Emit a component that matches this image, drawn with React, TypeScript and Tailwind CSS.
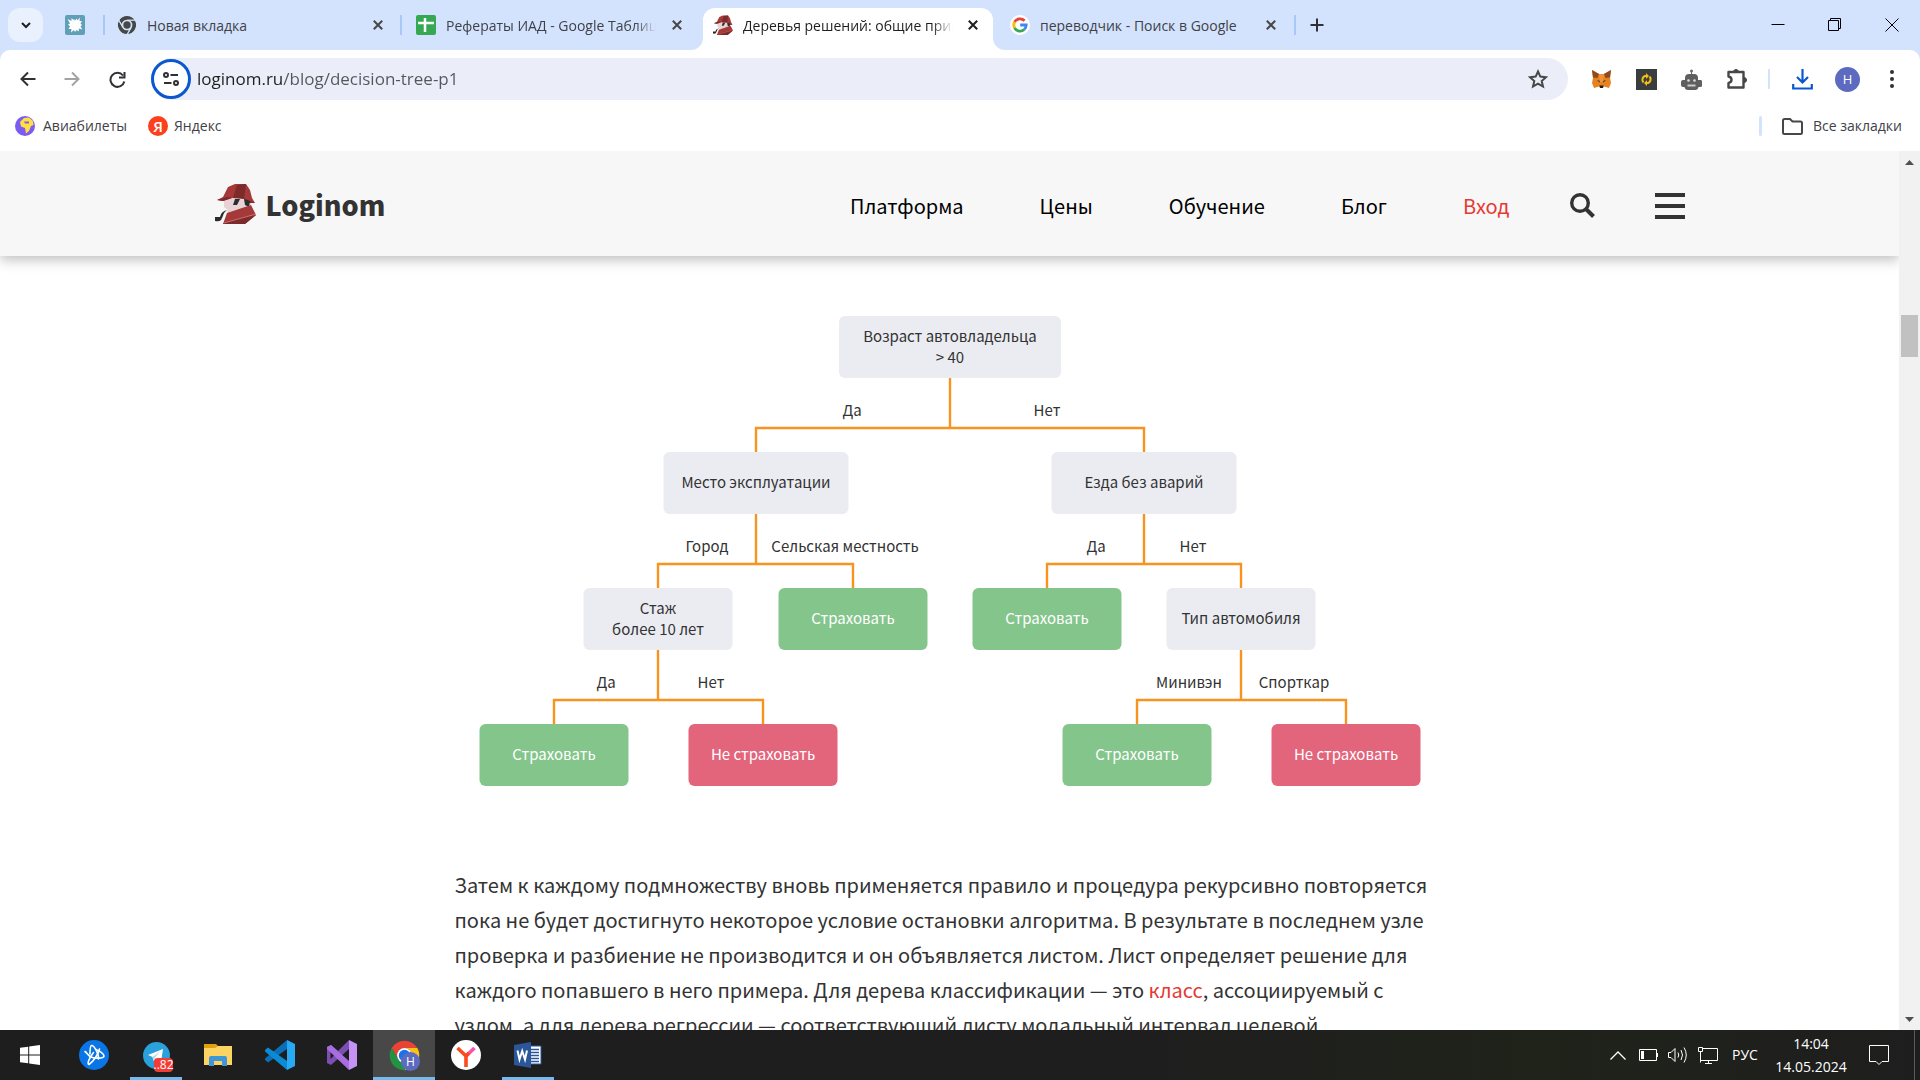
import React from "react";

const uiFont = "font-['Open_Sans','Noto_Sans',sans-serif]";
const siteFont = "font-['Noto_Sans_CJK_SC','Noto_Sans',sans-serif]";

/* ---------- icons ---------- */

function Detective({ className }: { className: string }) {
  return (
    <svg viewBox="0 0 41 41" className={className} aria-hidden="true">
      <path d="M9 16 24 14 37 17 35 25 12 31 13 27 9 24Z" fill="#e9d2d5" />
      <path d="M2 17 8 14 13 4 20 1 31 1 35 7 37 15 40 20 34 20 28 15 17 15 8 18Z" fill="#a53838" />
      <path d="M22 2 31 1 29 16 18 15Z" fill="#7d2a2a" />
      <path d="M2 17 12 14 17 15 8 18ZM28 15 40 20 34 20Z" fill="#7d2a2a" />
      <path d="M20 16 25 16 22 22 18 22ZM29 16 35 18 34 24 30 22Z" fill="#2c2c2c" />
      <path d="M12 30 36 22 41 32 30 41 8 41Z" fill="#a53838" />
      <path d="M9 40 41 32 30 41 8 41Z" fill="#7d2a2a" />
      <path d="M9 40 41 31" stroke="#e0a9a9" strokeWidth=".5" />
      <path d="M13 27 Q9 28 7.500 34 L6 37Q4 39 0 38L0 34 5 34Q6 28 13 27Z" fill="#2c2c2c" />
    </svg>
  );
}

function ChromeLogo({ className, mono = false }: { className: string; mono?: boolean }) {
  const gap = mono ? "#d3e3fd" : "none";
  return (
    <svg viewBox="1 1 46 46" className={className} aria-hidden="true">
      <g stroke={gap} strokeWidth="2.5">
        <path d="M4.95 13A22 22 0 0 1 43.05 13H24A11 11 0 0 0 14.47 29.5Z" fill={mono ? "#474747" : "#ea4335"} />
        <path d="M43.05 13A22 22 0 0 1 24 46L33.53 29.5A11 11 0 0 0 24 13Z" fill={mono ? "#474747" : "#fbc116"} />
        <path d="M24 46A22 22 0 0 1 4.95 13L14.47 29.5A11 11 0 0 0 33.53 29.5Z" fill={mono ? "#474747" : "#229342"} />
      </g>
      <circle cx="24" cy="24" r="11" fill={mono ? "#d3e3fd" : "#fff"} />
      <circle cx="24" cy="24" r="8.5" fill={mono ? "#474747" : "#1a73e8"} />
    </svg>
  );
}

function SplatIcon() {
  return (
    <svg viewBox="0 0 20 20" className="size-5" aria-hidden="true">
      <rect width="20" height="20" rx="2" fill="#5f9fb8" />
      <path
        d="M9 4 10 5.500 12 3.500 12.500 5.500 15 2.500 14.500 6 17 6 15.500 8.500 17 10 15.500 11.500 17.500 14.500 14 13.500 13.500 16.500 11.500 15 10 17 9 15 6 17.500 6.500 14 3.500 14 5 11.500 3 9.500 5 8.500 2.500 4 6.500 6 6.500 3 8.500 5Z"
        fill="#fff"
      />
    </svg>
  );
}

function SheetsIcon() {
  return (
    <svg viewBox="0 0 20 20" className="size-5" aria-hidden="true">
      <rect width="20" height="20" rx="2" fill="#34a853" />
      <path d="M2 8H18M9 3V17" stroke="#fff" strokeWidth="2.500" />
    </svg>
  );
}

function GoogleIcon() {
  return (
    <svg viewBox="0 0 20 20" className="size-5" aria-hidden="true">
      <circle cx="10" cy="10" r="10" fill="#fff" />
      <g fill="none" strokeWidth="2.800">
        <path d="M14.600 5.800A6.200 6.200 0 0 0 4.600 7" stroke="#ea4335" />
        <path d="M4.600 7A6.200 6.200 0 0 0 4.600 13" stroke="#fbbc05" />
        <path d="M4.600 13A6.200 6.200 0 0 0 14.200 14.500" stroke="#34a853" />
        <path d="M14.200 14.500A6.200 6.200 0 0 0 16.200 10H10.200" stroke="#4285f4" />
      </g>
    </svg>
  );
}

function CloseX({ dark = false }: { dark?: boolean }) {
  return (
    <svg viewBox="0 0 10 10" className="size-[10px]" aria-hidden="true">
      <path d="M.8.8 9.200 9.200M9.200.8.8 9.200" stroke={dark ? "#1f1f1f" : "#474747"} strokeWidth="2" />
    </svg>
  );
}

/* ---------- browser chrome ---------- */

type TabProps = { icon: React.ReactNode; title: string; active?: boolean; fade?: boolean };

function Tab({ icon, title, active, fade }: TabProps) {
  return (
    <div
      role="tab"
      aria-selected={!!active}
      className={
        active
          ? "relative z-10 flex h-[42px] w-[290px] items-center rounded-t-xl bg-white pr-[15px] pb-2 pl-[10px] text-[#1f1f1f]"
          : "flex h-[42px] w-[298px] items-center pr-[18px] pb-2 pl-[14px] text-[#3f4147]"
      }
    >
      {active && (
        <>
          <svg viewBox="0 0 12 12" className="absolute bottom-0 -left-3 size-3" aria-hidden="true">
            <path d="M12 0V12H0A12 12 0 0 0 12 0Z" fill="#fff" />
          </svg>
          <svg viewBox="0 0 12 12" className="absolute -right-3 bottom-0 size-3" aria-hidden="true">
            <path d="M0 0V12H12A12 12 0 0 1 0 0Z" fill="#fff" />
          </svg>
        </>
      )}
      {icon}
      <span
        className={
          fade
            ? "mt-px ml-[10px] w-[210px] overflow-hidden text-sm whitespace-nowrap mask-r-from-90%"
            : "mt-px ml-[10px] w-[210px] overflow-hidden text-sm whitespace-nowrap"
        }
      >
        {title}
      </span>
      <button aria-label="Закрыть вкладку" className="ml-auto">
        <CloseX dark={active} />
      </button>
    </div>
  );
}

function TabStrip() {
  return (
    <div className="flex h-[50px] shrink-0 items-start bg-[#d3e3fd] pt-2">
      <button
        aria-label="Поиск вкладок"
        className="ml-2 flex h-[34px] w-[35px] items-center justify-center rounded-xl bg-[#e9f1fe]"
      >
        <svg viewBox="0 0 10 7" className="h-[7px] w-[10px]" fill="none" stroke="#1f1f1f" strokeWidth="2" aria-hidden="true">
          <path d="M1 1 5 5 9 1" />
        </svg>
      </button>
      <div role="tablist" className="flex items-start">
        <div role="tab" aria-label="Закреплённая вкладка" className="flex h-[42px] w-[60px] items-center pb-2 pl-[22px]">
          <SplatIcon />
        </div>
        <i className="mt-[7px] -mr-0.5 h-5 w-0.5 bg-[#a8c7fa]" />
        <Tab icon={<ChromeLogo className="size-5 shrink-0" mono />} title="Новая вкладка" />
        <i className="mt-[7px] -ml-px h-5 w-0.5 bg-[#a8c7fa]" />
        <Tab icon={<SheetsIcon />} title="Рефераты ИАД - Google Таблицы" fade />
        <div className="w-[3px]" />
        <Tab icon={<Detective className="size-5 shrink-0" />} title="Деревья решений: общие принципы" active fade />
        <div className="w-[3px]" />
        <Tab icon={<GoogleIcon />} title="переводчик - Поиск в Google" />
        <i className="mt-[7px] h-5 w-0.5 bg-[#a8c7fa]" />
      </div>
      <button aria-label="Новая вкладка" className="mt-[10px] ml-[14px]">
        <svg viewBox="0 0 14 14" className="size-[14px]" stroke="#303134" strokeWidth="2" aria-hidden="true">
          <path d="M7 .5V13.500M.5 7H13.500" />
        </svg>
      </button>
      <div className="ml-auto flex items-center gap-[43px] pt-[10px] pr-[21px]">
        <button aria-label="Свернуть">
          <svg viewBox="0 0 14 14" className="size-[14px]" stroke="#000" aria-hidden="true">
            <path d="M.5 6.500H13.500" />
          </svg>
        </button>
        <button aria-label="Свернуть в окно">
          <svg viewBox="0 0 14 14" className="size-[14px]" fill="none" stroke="#000" aria-hidden="true">
            <path d="M.5 2.500H10.500V12.500H.5ZM2.500 2.500V.5H12.500V10.500H10.500" />
          </svg>
        </button>
        <button aria-label="Закрыть">
          <svg viewBox="0 0 14 14" className="size-[14px]" stroke="#000" aria-hidden="true">
            <path d="M.5.5 13.500 13.500M13.500.5.5 13.500" />
          </svg>
        </button>
      </div>
    </div>
  );
}

function Toolbar() {
  return (
    <div className="bg-[#d3e3fd]">
      <div className="flex h-[58px] items-center rounded-t-[10px] bg-white pr-[26px] pl-5">
        <button aria-label="Назад">
          <svg viewBox="0 0 16 16" className="size-4" fill="none" stroke="#303134" strokeWidth="2" aria-hidden="true">
            <path d="M15.500 8H1.500M8 1.500 1.500 8 8 14.500" />
          </svg>
        </button>
        <button aria-label="Вперёд" className="ml-7">
          <svg viewBox="0 0 16 16" className="size-4" fill="none" stroke="#a3a3a3" strokeWidth="2" aria-hidden="true">
            <path d="M.5 8H14.500M8 1.500 14.500 8 8 14.500" />
          </svg>
        </button>
        <button aria-label="Обновить" className="ml-[29px]">
          <svg viewBox="0 0 17 17" className="size-[17px]" fill="none" stroke="#303134" strokeWidth="2" aria-hidden="true">
            <path d="M14 4.500A7 7 0 1 0 15.300 10.500M15.500 1V6.500H10" />
          </svg>
        </button>
        <div className="ml-[25px] flex h-[42px] flex-1 items-center rounded-full bg-[#ebeef8] pr-5">
          <button
            aria-label="Сведения о сайте"
            className="flex size-10 items-center justify-center rounded-full border-3 border-[#0b57d0] bg-white"
          >
            <svg viewBox="0 0 16 14" className="h-[14px] w-4" fill="none" stroke="#303134" strokeWidth="2" aria-hidden="true">
              <circle cx="3" cy="3" r="2" />
              <circle cx="13" cy="11" r="2" />
              <path d="M7.500 3H15M1 11H8.500" />
            </svg>
          </button>
          <input
            aria-label="Адресная строка"
            defaultValue="loginom.ru/blog/decision-tree-p1"
            className="ml-[6px] min-w-0 flex-1 bg-[linear-gradient(90deg,#1f1f1f_85px,#54565b_85px)] bg-clip-text text-[17px] leading-7 text-transparent outline-none"
          />
          <button aria-label="Добавить в закладки">
            <svg viewBox="0 0 20 20" className="size-5" fill="none" stroke="#474747" strokeWidth="2" aria-hidden="true">
              <path d="M10 2.500 12.300 7.600 18 8.200 13.700 12 15 17.500 10 14.600 5 17.500 6.300 12 2 8.200 7.700 7.600Z" />
            </svg>
          </button>
        </div>
        <div className="ml-[23px] flex items-center gap-6">
          <button aria-label="MetaMask">
            <svg viewBox="0 0 21 20" className="h-5 w-[21px]" aria-hidden="true">
              <path d="M1 1 8 5H13L20 1 19 9 20 14 18 19 13 17.500 11.500 19H9.500L8 17.500 3 19 1 14 2 9Z" fill="#e8821e" />
              <path d="M1 1 8 5 6.500 9 2 8.500ZM20 1 13 5 14.500 9 19 8.500Z" fill="#8e4a20" />
              <path d="M6 11 9 12 8.500 13.500ZM15 11 12 12 12.500 13.500Z" fill="#233447" />
              <path d="M8.500 16.500H12.500L12 19H9Z" fill="#1c1c1c" />
              <path d="M8 5H13L12 13H9Z" fill="#f0923a" />
            </svg>
          </button>
          <button aria-label="Синхронизация">
            <svg viewBox="0 0 21 21" className="size-[21px]" aria-hidden="true">
              <rect width="21" height="21" fill="#3a3d40" />
              <g fill="none" stroke="#f5bf12" strokeWidth="2">
                <path d="M7.500 13.500A4 4 0 0 1 9 7H11M13.500 7.500A4 4 0 0 1 12 14H10" />
              </g>
              <path d="M10 4 13 7 10 10ZM11 11V17L8 14Z" fill="#f5bf12" />
            </svg>
          </button>
          <button aria-label="Робот">
            <svg viewBox="0 0 21 21" className="size-[21px]" aria-hidden="true">
              <circle cx="10.500" cy="2" r="1.500" fill="#6b6b6b" />
              <path d="M10 3H11V6H10Z" fill="#6b6b6b" />
              <path d="M4 9Q4 5 8 5H13Q17 5 17 9V11H20Q21 11 21 13V17Q21 18 19 18H17.500Q17 21 14 21H7Q4 21 3.500 18H2Q0 18 0 16V13Q0 11 2 11H4Z" fill="#5f5f5f" />
              <circle cx="7.500" cy="11.500" r="1.300" fill="#ddd" />
              <circle cx="13.500" cy="11.500" r="1.300" fill="#ddd" />
              <path d="M6.500 15.500H14.500V17.500H6.500Z" fill="#ccc" />
            </svg>
          </button>
          <button aria-label="Расширения">
            <svg viewBox="0 0 21 21" className="size-[21px]" aria-hidden="true">
              <path d="M2.500 3H17.500V18.500H2.500V14Q5.500 13.500 5.500 10.800T2.500 7.500Z" fill="none" stroke="#474747" strokeWidth="2.400" strokeLinejoin="round" />
              <path d="M7.500 3A2.500 2.500 0 0 1 12.500 3ZM18 8.500A2.500 2.500 0 0 1 18 13.500Z" fill="#474747" stroke="#474747" />
            </svg>
          </button>
        </div>
        <i className="ml-[21px] h-5 w-0.5 bg-[#d3e3fd]" />
        <button aria-label="Загрузки" className="ml-[22px]">
          <svg viewBox="0 0 21 21" className="size-[21px]" fill="none" stroke="#0b57d0" strokeWidth="2.200" aria-hidden="true">
            <path d="M10.500 0V13M5 8 10.500 13.500 16 8M1.200 15V19.500H19.800V15" />
          </svg>
        </button>
        <button aria-label="Профиль" className="ml-[22px] size-[25px] rounded-full bg-[#5c6bc0] text-[13px] leading-none text-white">
          H
        </button>
        <button aria-label="Меню браузера" className="ml-[30px]">
          <svg viewBox="0 0 4 18" className="h-[18px] w-1" fill="#303134" aria-hidden="true">
            <circle cx="2" cy="2" r="2" />
            <circle cx="2" cy="9" r="2" />
            <circle cx="2" cy="16" r="2" />
          </svg>
        </button>
      </div>
    </div>
  );
}

function Bookmarks() {
  return (
    <div className="flex h-[43px] shrink-0 items-center bg-white pr-[18px] pb-[7px] pl-[15px] text-sm text-[#3f4147]">
      <a href="#avia" className="flex items-center gap-2">
        <svg viewBox="0 0 20 20" className="size-5" aria-hidden="true">
          <circle cx="10" cy="10" r="10" fill="#7a5cf5" />
          <path d="M5 6 9 2 14 1.500 18 5 18.500 9 16 10 14 15 11 17.500 10 12 6 10.500Z" fill="#ffe040" />
          <path d="M9 5.500H14V7.500H10Z" fill="#7a5cf5" />
        </svg>
        Авиабилеты
      </a>
      <a href="#yandex" className="ml-[21px] flex items-center gap-[6px]">
        <span className="flex size-5 items-center justify-center rounded-full bg-[#fc3f1d] text-[15px] leading-none font-semibold text-white" aria-hidden="true">
          Я
        </span>
        Яндекс
      </a>
      <i className="ml-auto h-5 w-[3px] rounded bg-[#d3e3fd]" />
      <button className="ml-5 flex items-center gap-[10px]">
        <svg viewBox="0 0 21 17" className="h-[17px] w-[21px]" fill="none" stroke="#474747" strokeWidth="2" aria-hidden="true">
          <path d="M1 14.500V2.500Q1 1 2.500 1H8L10.500 3.500H18.500Q20 3.500 20 5V14.500Q20 16 18.500 16H2.500Q1 16 1 14.500Z" />
        </svg>
        Все закладки
      </button>
    </div>
  );
}

/* ---------- site ---------- */

function SiteHeader() {
  return (
    <header className="relative z-10 h-[105px] bg-[#f7f7f7] shadow-[0_4px_12px_rgba(0,0,0,0.25)]">
      <div className="mx-auto flex h-full max-w-[1470px] items-center pt-1">
        <a href="#home" className="flex items-center gap-[10px] pb-1 text-[27px] leading-9 font-black text-[#333]">
          <Detective className="size-[41px]" />
          <span className="mt-0.5">Loginom</span>
        </a>
        <nav className="ml-auto flex items-center gap-[76px] text-xl leading-7 text-black">
          <a href="#platform">Платформа</a>
          <a href="#prices">Цены</a>
          <a href="#learn">Обучение</a>
          <a href="#blog">Блог</a>
          <a href="#login" className="text-[#e53935]">Вход</a>
        </nav>
        <button aria-label="Поиск" className="ml-[60px]">
          <svg viewBox="0 0 25 25" className="size-[25px]" fill="none" stroke="#333" aria-hidden="true">
            <circle cx="10" cy="10" r="8.300" strokeWidth="3.400" />
            <path d="M16 16 23.500 23.500" strokeWidth="4" />
          </svg>
        </button>
        <button aria-label="Меню" className="ml-[60px] flex w-[30px] flex-col gap-[7px]">
          <i className="h-1 w-full bg-[#333]" />
          <i className="h-1 w-full bg-[#333]" />
          <i className="h-1 w-full bg-[#333]" />
        </button>
      </div>
    </header>
  );
}

/* Positions below are in canvas pixels; x is a node's centre, y its top. */
const nodes = [
  { x: 471, y: 0, w: 222, kind: "q", text: ["Возраст автовладельца", "> 40"] },
  { x: 277, y: 136, w: 185, kind: "q", text: ["Место эксплуатации"] },
  { x: 665, y: 136, w: 185, kind: "q", text: ["Езда без аварий"] },
  { x: 179, y: 272, w: 149, kind: "q", text: ["Стаж", "более 10 лет"] },
  { x: 374, y: 272, w: 149, kind: "yes", text: ["Страховать"] },
  { x: 568, y: 272, w: 149, kind: "yes", text: ["Страховать"] },
  { x: 762, y: 272, w: 149, kind: "q", text: ["Тип автомобиля"] },
  { x: 75, y: 408, w: 149, kind: "yes", text: ["Страховать"] },
  { x: 284, y: 408, w: 149, kind: "no", text: ["Не страховать"] },
  { x: 658, y: 408, w: 149, kind: "yes", text: ["Страховать"] },
  { x: 867, y: 408, w: 149, kind: "no", text: ["Не страховать"] },
];

const labels = [
  { x: 373, y: 93, text: "Да" },
  { x: 568, y: 93, text: "Нет" },
  { x: 228, y: 229, text: "Город" },
  { x: 366, y: 229, text: "Сельская местность" },
  { x: 617, y: 229, text: "Да" },
  { x: 714, y: 229, text: "Нет" },
  { x: 127, y: 365, text: "Да" },
  { x: 232, y: 365, text: "Нет" },
  { x: 710, y: 365, text: "Минивэн" },
  { x: 815, y: 365, text: "Спорткар" },
];

const kindClass: Record<string, string> = {
  q: "bg-[#ebecf2] text-[#333]",
  yes: "bg-[#84c58b] text-white",
  no: "bg-[#e2657c] text-white",
};

function DecisionTree() {
  return (
    <figure className="relative mx-auto h-[471px] w-[941px] text-[15px] leading-[21px]">
      <svg viewBox="0 0 941 471" className="absolute inset-0 size-full" fill="none" stroke="#f7931e" strokeWidth="2.400" aria-hidden="true">
        <path d="M471 62V112M277 137V112H665V137" />
        <path d="M277 198V248M179 273V248H374V273" />
        <path d="M665 198V248M568 273V248H762V273" />
        <path d="M179 334V384M75 409V384H284V409" />
        <path d="M762 334V384M658 409V384H867V409" />
      </svg>
      {nodes.map((n, i) => (
        <div
          key={i}
          className={`absolute flex h-[62px] -translate-x-1/2 flex-col items-center justify-center rounded-md pb-[3px] text-center whitespace-nowrap ${kindClass[n.kind]}`}
          style={{ left: n.x, top: n.y, width: n.w }}
        >
          {n.text.map((t) => (
            <span key={t}>{t}</span>
          ))}
        </div>
      ))}
      {labels.map((l, i) => (
        <span
          key={i}
          className="absolute -translate-x-1/2 -translate-y-1/2 whitespace-nowrap text-[#333]"
          style={{ left: l.x, top: l.y }}
        >
          {l.text}
        </span>
      ))}
    </figure>
  );
}

function Article() {
  return (
    <main className="pt-[60px]">
      <DecisionTree />
      <p className="mx-auto mt-20 max-w-[990px] text-xl leading-[35px] whitespace-nowrap text-[#333]">
        Затем к каждому подмножеству вновь применяется правило и процедура рекурсивно повторяется
        <br />
        пока не будет достигнуто некоторое условие остановки алгоритма. В результате в последнем узле
        <br />
        проверка и разбиение не производится и он объявляется листом. Лист определяет решение для
        <br />
        каждого попавшего в него примера. Для дерева классификации — это{" "}
        <a href="#class" className="text-[#e53935]">класс</a>, ассоциируемый с
        <br />
        узлом, а для дерева регрессии — соответствующий листу модальный интервал целевой
      </p>
    </main>
  );
}

function Scrollbar() {
  return (
    <div className="flex w-[21px] shrink-0 flex-col items-center justify-between bg-[#f1f1f1] pt-[9px] pb-[8px]">
      <svg viewBox="0 0 9 5" className="h-[5px] w-[9px]" fill="#505050" aria-hidden="true">
        <path d="M4.500 0 9 5H0Z" />
      </svg>
      <div className="mt-[150px] mb-auto h-[42px] w-[17px] bg-[#c1c1c1]" />
      <svg viewBox="0 0 9 5" className="h-[5px] w-[9px]" fill="#505050" aria-hidden="true">
        <path d="M0 0H9L4.500 5Z" />
      </svg>
    </div>
  );
}

/* ---------- taskbar ---------- */

function TaskButton({ label, open, active, children }: { label: string; open?: boolean; active?: boolean; children: React.ReactNode }) {
  return (
    <button
      aria-label={label}
      className={`relative flex h-full w-[62px] items-center justify-center ${active ? "bg-[#484848]" : ""}`}
    >
      {children}
      {(open || active) && (
        <i className={`absolute bottom-0 h-[3px] bg-[#76b9ed] ${active ? "inset-x-0" : "inset-x-[5px]"}`} />
      )}
    </button>
  );
}

function Taskbar() {
  return (
    <footer className="flex h-[50px] shrink-0 items-center bg-linear-to-r from-[#1e1e1e] from-60% via-[#20231a] via-80% to-[#1e1e1e] text-white">
      <button aria-label="Пуск" className="flex h-full w-[63px] items-center pl-5">
        <svg viewBox="0 0 20 20" className="size-5" fill="#fff" aria-hidden="true">
          <path d="M0 2.800 8.200 1.700V9.500H0ZM9.200 1.500 20 0V9.500H9.200ZM0 10.500H8.200V18.300L0 17.200ZM9.200 10.500H20V20L9.200 18.500Z" />
        </svg>
      </button>
      <TaskButton label="Battle.net">
        <svg viewBox="0 0 30 30" className="size-[30px]" fill="none" aria-hidden="true">
          <circle cx="15" cy="15" r="15" fill="#0a75e6" />
          <g stroke="#fff" strokeWidth="1.600" strokeLinecap="round">
            <path d="M11 14C11 9 11 6 12.500 5.500C15 5 20 14 19.500 19" />
            <path d="M17 9.500C21 11 25 14 25 16C25 18.500 15 19 11 16.500C9 15 7.500 12.500 6 11.500" />
            <path d="M20.500 9C19 15 14 22 10 24.500C8 24 9.500 19 14.500 12.500" />
          </g>
        </svg>
      </TaskButton>
      <TaskButton label="Telegram" open>
        <svg viewBox="0 0 27 27" className="size-[27px]" aria-hidden="true">
          <circle cx="13.500" cy="13.500" r="13.500" fill="#2aa1da" />
          <path d="M5 13 20 7 18 20 12.500 16.500 10.500 19 9.500 15Z" fill="#fff" />
          <path d="M9.500 15 17 9.500 11.500 16 10.500 19Z" fill="#b8d8ea" />
        </svg>
        <span className="absolute top-[28px] left-[29px] flex h-[14px] w-[19px] items-center justify-center rounded bg-[#f23c34] text-xs leading-none">
          ..82
        </span>
      </TaskButton>
      <TaskButton label="Проводник">
        <svg viewBox="0 0 28 24" className="h-6 w-7" aria-hidden="true">
          <path d="M0 1H12L14 3V8H0Z" fill="#e0a010" />
          <path d="M0 5H11L14 3H28V22H0Z" fill="#fcd462" />
          <path d="M5 23V15Q5 13 7 13H21Q23 13 23 15V23H18V18H10V23Z" fill="#3f95d6" />
        </svg>
      </TaskButton>
      <TaskButton label="Visual Studio Code">
        <svg viewBox="0 0 30 30" className="size-[30px]" aria-hidden="true">
          <path d="M22 0V9L3 22.500 0 20V18.500Z" fill="#0a6fb8" />
          <path d="M22 30V21L3 7.500 0 10V11.500Z" fill="#0d8ad4" />
          <path d="M22 0 30 4V26L22 30Z" fill="#2aa9f3" />
        </svg>
      </TaskButton>
      <TaskButton label="Visual Studio">
        <svg viewBox="0 0 30 30" className="size-[30px]" aria-hidden="true">
          <path fillRule="evenodd" d="M0 7 4 5 11 11 22 0V9L4 25 0 23ZM3.500 11V19L7.500 15Z" fill="#7d4fb3" />
          <path d="M4 5 22 21V30L0 9V7Z" fill="#a86de0" />
          <path d="M22 0 30 4V26L22 30Z" fill="#c792f5" />
        </svg>
      </TaskButton>
      <TaskButton label="Google Chrome" active>
        <ChromeLogo className="size-[31px]" />
        <span className="absolute top-[22px] left-[28px] flex size-[19px] items-center justify-center rounded-full bg-[#5c6bc0] text-xs leading-none">
          H
        </span>
      </TaskButton>
      <TaskButton label="Яндекс Браузер">
        <svg viewBox="0 0 30 30" className="size-[30px]" fill="none" aria-hidden="true">
          <circle cx="15" cy="15" r="15" fill="#fff" />
          <path d="M15 16 23.500 8" stroke="#ff4fae" strokeWidth="3.600" />
          <path d="M15 27V16L6.500 8M15 16 18 13" stroke="#fb4a1e" strokeWidth="3.600" />
        </svg>
      </TaskButton>
      <TaskButton label="Word" open>
        <svg viewBox="0 0 28 26" className="h-[26px] w-7" fill="none" aria-hidden="true">
          <path d="M15 4H27V22H15Z" fill="#fff" stroke="#2b579a" />
          <path d="M16 7.500H25M16 10.500H25M16 13.500H25M16 16.500H25M16 19.500H25" stroke="#2b579a" strokeWidth="1.500" />
          <path d="M0 3 17 0V26L0 23Z" fill="#2b579a" />
          <path d="M3.500 8.500 5.500 17.500 8.200 9 11 17.500 13 8.500" stroke="#fff" strokeWidth="2" />
        </svg>
      </TaskButton>

      <div className="ml-auto flex h-full items-center">
        <svg viewBox="0 0 16 9" className="h-[9px] w-4" fill="none" stroke="#fff" strokeWidth="1.300" aria-hidden="true">
          <path d="M.5 8.500 8 1 15.500 8.500" />
        </svg>
        <svg viewBox="0 0 19 12" className="ml-[13px] h-3 w-[19px]" fill="none" stroke="#fff" aria-hidden="true">
          <path d="M.5.5H17.500V11.500H.5ZM18.500 4V8" />
          <path d="M2 2H5V10H2Z" fill="#fff" stroke="none" />
        </svg>
        <svg viewBox="0 0 20 18" className="ml-[10px] h-[18px] w-5" fill="none" stroke="#fff" aria-hidden="true">
          <path d="M.5 6.500H3L7 2.500V15.500L3 11.500H.5Z" />
          <path d="M10 6.500Q11.500 9 10 11.500M13 4Q16 9 13 14M16 1.500Q20.500 9 16 16.500" />
        </svg>
        <svg viewBox="0 0 20 17" className="ml-[10px] h-[17px] w-5" fill="none" stroke="#fff" aria-hidden="true">
          <path d="M5 1.500H19.500V13.500H2.500V7M.5.5H4.500V4.500H.5ZM2.500 4.500V15.500M10.500 13.500V16M7 16.500H14" />
        </svg>
        <span className="ml-[14px] w-7 text-sm">РУС</span>
        <time dateTime="2024-05-14T14:04" className="ml-[15px] flex w-[72px] flex-col items-center text-sm leading-[23px]">
          <span>14:04</span>
          <span>14.05.2024</span>
        </time>
        <button aria-label="Уведомления" className="ml-[22px]">
          <svg viewBox="0 0 20 20" className="size-5" fill="none" stroke="#fff" aria-hidden="true">
            <path d="M.5.5H19.500V16.500H13L10 19.500 7 16.500H.5Z" />
          </svg>
        </button>
        <i className="mr-[5px] ml-[25px] h-full w-px bg-[#5a5a5a]" />
      </div>
    </footer>
  );
}

export default function App() {
  return (
    <div className={`flex h-screen flex-col overflow-hidden bg-white ${uiFont}`}>
      <TabStrip />
      <Toolbar />
      <Bookmarks />
      <div className="flex min-h-0 flex-1">
        <div className={`min-w-0 flex-1 overflow-hidden ${siteFont}`}>
          <SiteHeader />
          <Article />
        </div>
        <Scrollbar />
      </div>
      <Taskbar />
    </div>
  );
}
